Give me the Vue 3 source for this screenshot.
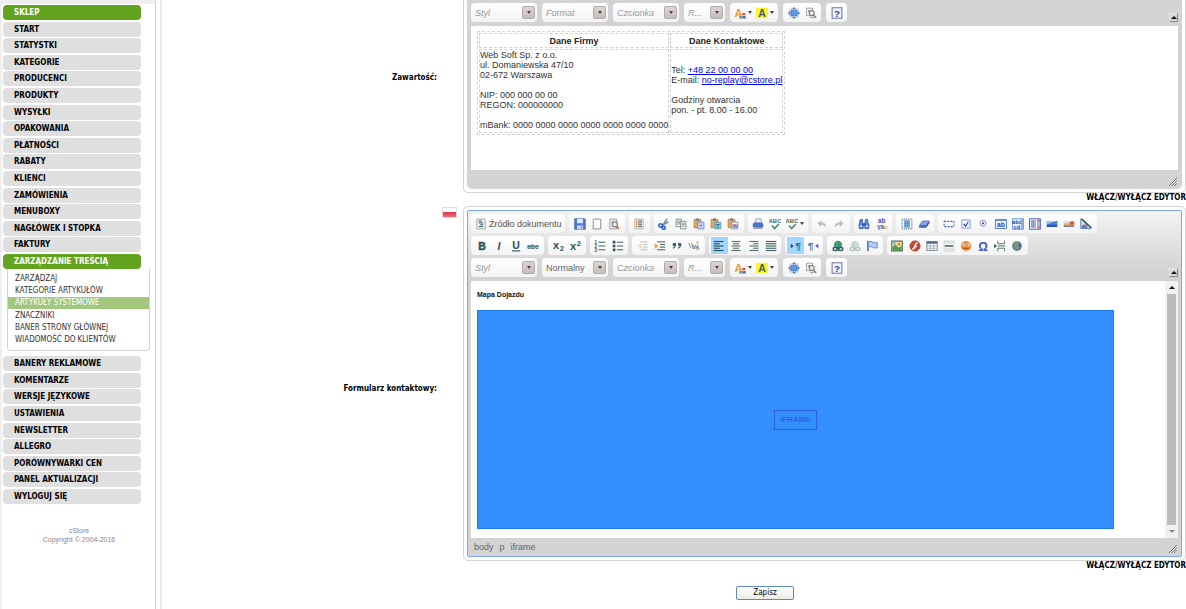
<script setup>
import { ref } from 'vue'

const menuTop = [
  'SKLEP', 'START', 'STATYSTKI', 'KATEGORIE', 'PRODUCENCI', 'PRODUKTY', 'WYSYŁKI', 'OPAKOWANIA',
  'PŁATNOŚCI', 'RABATY', 'KLIENCI', 'ZAMÓWIENIA', 'MENUBOXY', 'NAGŁÓWEK I STOPKA', 'FAKTURY', 'ZARZĄDZANIE TREŚCIĄ',
]
const highlighted = ['SKLEP', 'ZARZĄDZANIE TREŚCIĄ']
const submenu = [
  'ZARZĄDZAJ', 'KATEGORIE ARTYKUŁÓW', 'ARTYKUŁY SYSTEMOWE', 'ZNACZNIKI', 'BANER STRONY GŁÓWNEJ', 'WIADOMOŚĆ DO KLIENTÓW',
]
const activeSub = ref('ARTYKUŁY SYSTEMOWE')
const menuBottom = [
  'BANERY REKLAMOWE', 'KOMENTARZE', 'WERSJE JĘZYKOWE', 'USTAWIENIA', 'NEWSLETTER', 'ALLEGRO',
  'PORÓWNYWARKI CEN', 'PANEL AKTUALIZACJI', 'WYLOGUJ SIĘ',
]

const page = '<path d="M3 1.5h10v13H3z" fill="#fff" stroke="#5d7078"/>'
const clip = '<path d="M1.500 2h9v11h-9z" fill="#e9a85a" stroke="#b5713a"/><path d="M4 .5h4v3H4z" fill="#6c7c8c"/>'
const txt = (x, y, size, fill, s, extra = '') =>
  `<text x="${x}" y="${y}" font-size="${size}" fill="${fill}" text-anchor="middle" font-family="Liberation Sans, Arial, sans-serif" font-weight="bold" ${extra}>${s}</text>`
const lines = (color, rows) =>
  `<g stroke="${color}" stroke-width="1.500">${rows.map(([x1, x2, y]) => `<path d="M${x1} ${y}H${x2}"/>`).join('')}</g>`
const globe = (sea, land) =>
  `<circle cx="8" cy="6.500" r="5.500" fill="${sea}"/><path d="M4 4l3-2.500 3 1-2 3 1 3-3 1-3-3zM11 4l2 2-1 3-2-2z" fill="${land}"/>`
const chain = (c) =>
  `<g fill="none" stroke="${c}" stroke-width="2"><rect x="1.500" y="10" width="6" height="4" rx="2"/><rect x="8.500" y="10" width="6" height="4" rx="2"/><path d="M6 12h4"/></g>`

const art = {
  source: '<path d="M2.500 1.500h11v13h-11z" fill="#f4f8f8" stroke="#7c9498"/>' + lines('#3d6462', [[5, 9, 4], [5, 11, 6.5], [7, 11, 9], [5, 11, 11.5]]),
  save: '<path d="M1 1h13l1 1v13H1z" fill="#4a7ae0" stroke="#2f56b4"/><path d="M4 1h8v6H4z" fill="#dfeaff"/><path d="M4 10h8v5H4z" fill="#c9d6ee"/><path d="M9 11h2v3H9z" fill="#c98a3c"/>',
  newpage: page,
  preview: '<path d="M2.500 1.500h9v13h-9z" fill="#fff" stroke="#7b858a"/><path d="M4 4h5M4 6h3" stroke="#9aa"/><circle cx="9" cy="8.500" r="3.500" fill="#dfe9ec" stroke="#6b767b" stroke-width="1.400"/><path d="M11.500 11l3 3.500" stroke="#c8702f" stroke-width="2.200"/>',
  template: '<path d="M2.500 1.500h11v13h-11z" fill="#fff" stroke="#8a9894"/><path d="M4 3h2v10H4z" fill="#e9a33b"/>' + lines('#4d6664', [[7, 12, 4], [7, 12, 6.5], [7, 12, 9], [7, 12, 11.5]]),
  cut: '<path d="M12 1L6.500 9.500M14 5L5 10" stroke="#6f8fae" stroke-width="2"/><circle cx="3.500" cy="10" r="2.300" fill="none" stroke="#2f62c8" stroke-width="2.200"/><circle cx="7.500" cy="13" r="2" fill="none" stroke="#2f62c8" stroke-width="2.200"/>',
  copy: '<path d="M1.500 1.500h7v10h-7z" fill="#fff" stroke="#59706e"/><path d="M3 4h4M3 6h4M3 8h4" stroke="#59706e"/><path d="M7.500 4.500h7v10h-7z" fill="#fff" stroke="#59706e"/><path d="M9 7h4M9 9h4M9 11h4" stroke="#59706e"/>',
  paste: clip + '<path d="M6.500 5.500h8v9h-8z" fill="#fff" stroke="#3f66c4"/><path d="M8 8h5M8 10h5M8 12h5" stroke="#3f66c4"/>',
  pastetext: clip + '<path d="M6.500 5.500h8v9h-8z" fill="#8ec5df" stroke="#4c93b4"/>' + txt(10.5, 13, 8, '#26708f', 'T'),
  pasteword: clip + '<path d="M6.500 5.500h8v9h-8z" fill="#fff" stroke="#6a7fa4"/>' + txt(10.5, 13, 7, '#33509c', 'W'),
  print: '<path d="M5 1h7l1 6H4z" fill="#e3ecfa" stroke="#8793ab"/><path d="M1 8l2-2h10l2 2v4H1z" fill="#4a72c6"/><path d="M2 12h12v2.500H2z" fill="#8a98b4"/>',
  spell: txt(8, 7, 8, '#4a6866', 'ABC') + '<path d="M4 10l3.500 4L13 8" fill="none" stroke="#4a8a78" stroke-width="2.200"/>',
  undo: '<path d="M2 7l5-4v3c5 0 7 2 6 7-1-3-3-4-6-4v3z" fill="#b9c0c3"/>',
  redo: '<path d="M14 7L9 3v3c-5 0-7 2-6 7 1-3 3-4 6-4v3z" fill="#b9c0c3"/>',
  find: '<g fill="#5d86dd" stroke="#2c50a6"><path d="M3 2h3v4l1 2v6H1.500V8zM10 2h3v4l1.500 2v6H9V8z"/></g><path d="M6 7h4v3H6z" fill="#2c50a6"/><path d="M3 10h2v2H3zM11 10h2v2h-2z" fill="#fff"/>',
  replace: txt(7.5, 7, 8.5, '#3a50c0', 'ab') + txt(6, 14.5, 8.5, '#4c62cc', 'ya') + txt(13, 14.5, 8, '#e9903c', 'c'),
  selectall: '<path d="M1.500 1.500h13v13h-13z" fill="#f4f8fb" stroke="#56706f" stroke-width="1.300" stroke-dasharray="1.500 1"/><path d="M4 3h8v10H4z" fill="#76a6d8"/><path d="M5 5h6M5 7.500h6M5 10h6" stroke="#5a8cc4"/>',
  eraser: '<path d="M6 4h9l-4 6H2z" fill="#7fa6ee" stroke="#3f62bd"/><path d="M2 10h9v3H1z" fill="#3c5fbe"/><path d="M11 10l4-6v3l-4 6z" fill="#2d4a9c"/>',
  form: '<path d="M1.500 4.500h13v7h-13z" fill="none" stroke="#3c55c5" stroke-width="1.400" stroke-dasharray="2.500 1.800"/>',
  checkbox: '<path d="M2.500 2.500h11v11h-11z" fill="#f3f6ff" stroke="#6f82b8"/><path d="M5 8l2.500 3L11 5" fill="none" stroke="#2f49b5" stroke-width="1.600"/>',
  radio: '<circle cx="8" cy="7" r="4" fill="#f3f6ff" stroke="#8290bd" stroke-width="1.300"/><circle cx="8" cy="7" r="1.500" fill="#2f49b5"/>',
  textfield: '<path d="M.7 2h14.600v12H.7z" fill="#f5f8ff" stroke="#5a79c9" stroke-width="1.300"/><path d="M1 2h14v2H1z" fill="#6a93e2"/>' + txt(8, 12, 9, '#2f3fb0', 'ab'),
  textarea: '<path d="M.7 1h14.600v14H.7z" fill="#eef3ff" stroke="#6a9ae2" stroke-width="1.300"/><path d="M12 1h3v14h-3z" fill="#8fb2ec"/>' + txt(6.5, 7.5, 7.5, '#2f3f90', 'abc') + txt(6.5, 14, 7.5, '#2f3f90', 'cd'),
  select: '<path d="M.7 1h14.600v14H.7z" fill="#fff" stroke="#3f5fc0" stroke-width="1.300"/><path d="M10.500 1h4.500v14h-4.500z" fill="#9fbcf0"/><path d="M11 2h3.500v3H11zM11 11h3.500v3H11z" fill="#e3703c"/><path d="M2.500 4H9M2.500 6.700H9M2.500 9.400H9M2.500 12H9" stroke="#3246a5" stroke-width="1.500"/>',
  button: '<path d="M1 4h14v8H1z" fill="#2b55bb"/><path d="M1 4h14l-14 5z" fill="#9ec0f3"/><path d="M1 9l14-4v4z" fill="#4f83dd"/>',
  imagebutton: '<path d="M1 4h14v8H1z" fill="#e7b25b"/><path d="M1 4h8v3H1z" fill="#d9e4f4"/><path d="M9 6l4-2 2 2v3H9z" fill="#e2533a"/><path d="M1 10h14v2H1z" fill="#6b7fa8"/>',
  hidden: '<path d="M1 1l14 13H1z" fill="#cfe0fa" stroke="#3b64c3"/><path d="M2 1l13 12" stroke="#3e5a2c" stroke-width="2"/>' + txt(6, 13.5, 7, '#2b3da5', 'ab'),
  bold: txt(8, 13, 14, '#2f5558', 'B', 'stroke="#2f5558" stroke-width=".6"'),
  italic: txt(8, 13, 14, '#2f5558', 'I', 'font-style="italic"'),
  underline: txt(8, 12, 14, '#2f5558', 'U') + '<path d="M2.500 14.500h11" stroke="#2f5558" stroke-width="1.500"/>',
  strike: txt(8, 11.5, 9, '#4a6869', 'abc') + '<path d="M0 8.500h16" stroke="#4a6869"/>',
  sub: txt(5.5, 11.5, 15, '#2f5558', 'x') + txt(13, 15, 10, '#2f5558', '2'),
  sup: txt(5.5, 13.5, 15, '#2f5558', 'x') + txt(13, 8, 10, '#2f5558', '2'),
  ol: lines('#54716f', [[6, 15, 3], [6, 15, 8], [6, 15, 13]]) + txt(2.5, 5, 6, '#2f5558', '1') + txt(2.5, 10.5, 6, '#2f5558', '2') + txt(2.5, 16, 6, '#2f5558', '3'),
  ul: lines('#54716f', [[6.5, 15, 3], [6.5, 15, 8], [6.5, 15, 13]]) + '<path d="M1 1h3.500v3.500H1zM1 6.200h3.500v3.500H1zM1 11.400h3.500V15H1z" fill="#2f5558"/>',
  outdent: '<path d="M6 4L1 8l5 4z" fill="#f3d5b0"/>' + lines('#bac5c5', [[5, 14, 2.5], [8, 14, 6], [8, 14, 9.5], [5, 14, 13]]),
  indent: '<path d="M1 4l5 4-5 4z" fill="#eda04c"/>' + lines('#54716f', [[4, 15, 2.5], [8, 15, 6], [8, 15, 9.5], [4, 15, 13]]),
  quote: '<g fill="#3e6265"><circle cx="4.500" cy="6" r="2.400"/><circle cx="11.500" cy="6" r="2.400"/></g><path d="M6 6c0 3-1 4-3.500 5M13 6c0 3-1 4-3.500 5" fill="none" stroke="#3e6265" stroke-width="1.500"/>',
  div: '<path d="M1 4l3 7M5 4l2 8M12 8l3 3-3 3" fill="none" stroke="#72868a" stroke-width="1.300"/>' + txt(10, 12.5, 8, '#72868a', 'W') + '<path d="M11 3h3M12 5l2-3" stroke="#eaa052" stroke-width="1.500"/>',
  left: lines('#2a4f54', [[1, 14, 2], [1, 9, 5], [1, 14, 8], [1, 9, 11], [1, 14, 14]]),
  center: lines('#55706f', [[2, 14, 2], [4, 12, 5], [2, 14, 8], [4, 12, 11], [2, 14, 14]]),
  right: lines('#55706f', [[2, 14, 2], [7, 14, 5], [2, 14, 8], [7, 14, 11], [2, 14, 14]]),
  justify: lines('#3f6062', [[1, 15, 2], [1, 15, 5], [1, 15, 8], [1, 15, 11], [1, 15, 14]]),
  ltr: '<path d="M1 5l4 3-4 3z" fill="#2b3f9c"/>' + txt(11, 12, 13, '#41606a', '¶'),
  rtl: '<path d="M15 5l-4 3 4 3z" fill="#4c56b4"/>' + txt(5, 12, 13, '#5b7274', '¶'),
  link: globe('#3b7fd0', '#46a847') + chain('#35605d'),
  unlink: globe('#d3e0ec', '#bddcc2') + chain('#b7c5c6'),
  anchor: '<path d="M2.500 1v14" stroke="#3c5dc6" stroke-width="1.800"/><path d="M3 2h5l2 1.500h5v7h-5L8 9H3z" fill="#b7cdf4" stroke="#4b74cf"/>',
  image: '<path d="M1 1.500h14v13H1z" fill="#fbf0b4" stroke="#4d6b50" stroke-width="1.500"/><path d="M2 14V9l4-3 4 4 4-2v6z" fill="#4e9c55"/><circle cx="10.500" cy="5.500" r="2.300" fill="#e98e33"/><path d="M3 3h3v3H3z" fill="#68a2d8"/>',
  flash: '<circle cx="8" cy="8" r="6.800" fill="#cf4234" stroke="#a53324"/><path d="M11.500 4c-3 0-3 2-3.500 4s-1.500 4-3.500 4M7 8.500h3.500" fill="none" stroke="#fff" stroke-width="2"/>',
  table: '<path d="M1 2h14v12H1z" fill="#fff" stroke="#5f7278"/><path d="M1 2h14v3H1z" fill="#4e6b92"/><path d="M1 8h14M1 11h14M5.700 5v9M10.300 5v9" stroke="#94a3aa"/>',
  hr: '<path d="M1.500 1.500h13v13h-13z" fill="#f8fafa" stroke="#b9c2c2"/><path d="M3 4h10M3 12h10" stroke="#b3bdbd"/><path d="M2.500 8h11" stroke="#3f5d5d" stroke-width="2"/>',
  smile: '<circle cx="8" cy="8" r="6.800" fill="#f28b38"/><circle cx="5.300" cy="6.500" r="1.800" fill="#fff"/><circle cx="10.700" cy="6.500" r="1.800" fill="#fff"/><circle cx="5.500" cy="6.500" r=".8" fill="#333"/><circle cx="10.500" cy="6.500" r=".8" fill="#333"/><path d="M4.500 11h7" stroke="#8e4212" stroke-width="1.300"/>',
  omega: txt(8, 14, 16, '#3b58cf', 'Ω'),
  pagebreak: '<path d="M5 1v4h9V1M5 15v-4h9v4" fill="#f4f7f7" stroke="#64797a" stroke-width="1.300"/><path d="M5 8h10" stroke="#64797a" stroke-width="1.500"/><path d="M0 5l4 3-4 3z" fill="#3f6062"/>',
  iframe: '<circle cx="8" cy="8" r="6.500" fill="#5f7ba2"/><path d="M4 4l4-2 3 2-2 3 2 3-3 3-3-2z" fill="#7d9a66"/><path d="M10 5l3 2-1 3-2-2z" fill="#4a64a8"/>',
  color: txt(6, 13, 15, '#ef9c3f', 'A') + '<path d="M11 8h4v3h-4z" fill="#e24834"/><path d="M7 12h4v3.500H7z" fill="#58b04c"/><path d="M11.500 12h4v3.500h-4z" fill="#5262d8"/>',
  bgcolor: '<path d="M0 1h16v14H0z" fill="#fbf435"/>' + txt(8, 13, 14, '#48605d', 'A'),
  maximize: '<path d="M8 0l2.500 3h-5zM8 16l2.500-3h-5zM0 8l3-2.500v5zM16 8l-3-2.500v5z" fill="#47657e"/><rect x="2.500" y="2.500" width="11" height="11" rx="2" fill="none" stroke="#7da3cc"/><path d="M4 4.500h8v7H4z" fill="#5d9ae6" stroke="#3b6fb8"/>',
  blocks: '<path d="M2 1.500h8v10H2z" fill="#f3f3f3" stroke="#8d8d8d"/><path d="M4 4h3v3H4z" fill="#9aa"/><circle cx="9" cy="8" r="3.300" fill="#e7eaea" stroke="#777" stroke-width="1.400"/><path d="M7 13h5v2H7z" fill="#aaa"/><path d="M11.500 10.500l3 4" stroke="#a66c45" stroke-width="2"/>',
  about: '<path d="M1.500 1h13v14h-13z" fill="#f2f5ff" stroke="#6d7a9d" stroke-width="1.400"/>' + txt(8, 13, 13, '#2b3dab', '?'),
}

const b = (id, title, opt = {}) => ({ id, title, ...opt })
const rowOne = [
  [b('save', 'Zapisz'), b('newpage', 'Nowa strona'), b('preview', 'Podgląd')],
  [b('template', 'Szablony')],
  [b('cut', 'Wytnij'), b('copy', 'Kopiuj'), b('paste', 'Wklej'), b('pastetext', 'Wklej jako tekst'), b('pasteword', 'Wklej z Worda')],
  [b('print', 'Drukuj'), b('spell', 'Sprawdź pisownię'), b('spell', 'Pisownia', { arrow: true })],
  [b('undo', 'Cofnij'), b('redo', 'Ponów')],
  [b('find', 'Znajdź'), b('replace', 'Zamień')],
  [b('selectall', 'Zaznacz wszystko'), b('eraser', 'Usuń formatowanie')],
  [b('form', 'Formularz'), b('checkbox', 'Pole wyboru'), b('radio', 'Pole opcji'), b('textfield', 'Pole tekstowe'), b('textarea', 'Obszar tekstowy'),
    b('select', 'Lista'), b('button', 'Przycisk'), b('imagebutton', 'Przycisk graficzny'), b('hidden', 'Pole ukryte')],
]
const rowTwo = [
  [b('bold', 'Pogrubienie'), b('italic', 'Kursywa'), b('underline', 'Podkreślenie'), b('strike', 'Przekreślenie')],
  [b('sub', 'Indeks dolny'), b('sup', 'Indeks górny')],
  [b('ol', 'Lista numerowana'), b('ul', 'Lista wypunktowana')],
  [b('outdent', 'Zmniejsz wcięcie'), b('indent', 'Zwiększ wcięcie'), b('quote', 'Cytat'), b('div', 'Kontener div')],
  [b('left', 'Do lewej', { on: true }), b('center', 'Do środka'), b('right', 'Do prawej'), b('justify', 'Wyjustuj')],
  [b('ltr', 'Od lewej do prawej', { on: true }), b('rtl', 'Od prawej do lewej')],
  [b('link', 'Odnośnik'), b('unlink', 'Usuń odnośnik'), b('anchor', 'Kotwica')],
  [b('image', 'Obrazek'), b('flash', 'Flash'), b('table', 'Tabela'), b('hr', 'Linia pozioma'), b('smile', 'Emotikona'),
    b('omega', 'Znak specjalny'), b('pagebreak', 'Podział strony'), b('iframe', 'IFrame')],
]
const rowThree = [
  [b('color', 'Kolor tekstu', { arrow: true }), b('bgcolor', 'Kolor tła', { arrow: true })],
  [b('maximize', 'Maksymalizuj'), b('blocks', 'Pokaż bloki')],
  [b('about', 'O edytorze')],
]
const combosFor = (format) => [
  { label: 'Styl', text: 'Styl' },
  { label: 'Format', text: format, set: format !== 'Format' },
  { label: 'Czcionka', text: 'Czcionka' },
  { label: 'Rozmiar', text: 'R...', small: true },
]
const editors = [
  { id: 'content', label: 'Zawartość:', combos: combosFor('Format'), rows: [] },
  { id: 'form', label: 'Formularz kontaktowy:', combos: combosFor('Normalny'), rows: [rowOne, rowTwo] },
]
const weight = (group) => ({ flexGrow: group.length })
</script>

<template>
  <div class="page">
    <aside class="sidebar">
      <nav class="nav">
        <ul class="menu menu-top">
          <li v-for="m in menuTop" :key="m"><a href="#" :class="{ green: highlighted.includes(m) }">{{ m }}</a></li>
        </ul>
        <ul class="submenu">
          <li v-for="s in submenu" :key="s"><a href="#" :class="{ active: s === activeSub }" @click.prevent="activeSub = s">{{ s }}</a></li>
        </ul>
        <ul class="menu menu-bottom">
          <li v-for="m in menuBottom" :key="m"><a href="#">{{ m }}</a></li>
        </ul>
      </nav>
      <footer class="copyright">cStore<br>Copyright © 2004-2016</footer>
    </aside>

    <main class="main">
      <section v-for="e in editors" :key="e.id" class="field" :class="e.id">
        <h2 class="label">{{ e.label }}</h2>
        <div class="flag-cell"><span v-if="e.id === 'form'" class="flag"></span></div>
        <div class="editor-cell">
          <div class="frame">
            <div class="editor">
              <div class="toolbar">
                <div class="rows">
                  <div v-for="(row, i) in e.rows" :key="i" class="row" :class="'row-' + i">
                    <button v-if="i === 0" type="button" class="group source">
                      <svg class="ico" viewBox="0 0 16 16" v-html="art.source"></svg>Źródło dokumentu
                    </button>
                    <div v-for="(g, gi) in row" :key="gi" class="group grow" :style="weight(g)">
                      <button v-for="(t, ti) in g" :key="ti" type="button" class="tool" :class="{ on: t.on, wide: t.arrow }" :title="t.title" :aria-label="t.title">
                        <svg class="ico" viewBox="0 0 16 16" v-html="art[t.id]"></svg><i v-if="t.arrow" class="caret"></i>
                      </button>
                    </div>
                  </div>
                  <div class="row combos">
                    <div v-for="c in e.combos" :key="c.label" class="group combo" :class="{ small: c.small, set: c.set }">
                      <select :aria-label="c.label"><option>{{ c.text }}</option></select>
                      <span class="drop"><i class="caret"></i></span>
                    </div>
                    <div v-for="(g, gi) in rowThree" :key="gi" class="group">
                      <button v-for="(t, ti) in g" :key="ti" type="button" class="tool" :class="{ wide: t.arrow }" :title="t.title" :aria-label="t.title">
                        <svg class="ico" viewBox="0 0 16 16" v-html="art[t.id]"></svg><i v-if="t.arrow" class="caret"></i>
                      </button>
                    </div>
                  </div>
                </div>
                <button type="button" class="collapser" aria-label="Zwiń pasek"><i class="up"></i></button>
              </div>

              <div v-if="e.id === 'content'" class="doc doc-content">
                <table class="contact">
                  <thead><tr><th>Dane Firmy</th><th>Dane Kontaktowe</th></tr></thead>
                  <tbody>
                    <tr>
                      <td>Web Soft Sp. z o.o.<br>ul. Domaniewska 47/10<br>02-672 Warszawa<br><br>NIP: 000 000 00 00<br>REGON: 000000000<br><br>mBank: 0000 0000 0000 0000 0000 0000 0000</td>
                      <td>Tel: <a href="#">+48 22 00 00 00</a><br>E-mail: <a href="#">no-replay@cstore.pl</a><br><br>Godziny otwarcia<br>pon. - pt. 8.00 - 16.00</td>
                    </tr>
                  </tbody>
                </table>
              </div>
              <div v-else class="doc doc-form">
                <div class="body">
                  <h6>Mapa Dojazdu</h6>
                  <div class="map"><span>IFRAME</span></div>
                </div>
                <div class="scroll">
                  <i class="up"></i>
                  <div class="thumb"></div>
                  <i class="up down"></i>
                </div>
              </div>

              <div class="status">
                <div class="path"><template v-if="e.id === 'form'"><a href="#">body</a><a href="#">p</a><a href="#">iframe</a></template></div>
                <svg class="grip" viewBox="0 0 10 10"><path d="M0 10L9 1M3 10l6-6M6 10l3-3" stroke="#fff" transform="translate(1 0)" /><path d="M0 10L9 1M3 10l6-6M6 10l3-3" stroke="#555" /></svg>
              </div>
            </div>
          </div>
          <a href="#" class="toggle">WŁĄCZ/WYŁĄCZ EDYTOR</a>
        </div>
      </section>
      <div class="actions"><button type="submit" class="submit">Zapisz</button></div>
    </main>
  </div>
</template>

<style>
body { background: #fff; overflow: hidden; }
</style>

<style scoped>
.page { display: flex; min-height: 100vh; font: 8px/10px "DejaVu Sans Condensed", "DejaVu Sans", Tahoma, sans-serif; color: #000; }
.page * { box-sizing: border-box; }
a { color: inherit; text-decoration: none; }
ul { list-style: none; margin: 0; padding: 0; }
button, select { font: inherit; color: inherit; margin: 0; }

.sidebar { flex: none; width: 156px; border-top: 4px solid #efefef; border-left: 2px solid #efefef; border-right: 1px solid #ccc; padding: 1px 0 0 1px; }
.menu { display: flex; flex-direction: column; justify-content: space-between; width: 138px; }
.menu-top { height: 264px; }
.menu-bottom { height: 148px; margin-top: 5px; }
.menu a { display: block; height: 15px; line-height: 15px; padding-left: 11px; border-radius: 4px; background: #dfdfdf; font-weight: bold; }
.menu a.green { background: #62a420; color: #fff; }
.submenu { display: flex; flex-direction: column; justify-content: space-between; width: 143px; height: 82px; margin-left: 4px; padding: 4px 0; border: 1px solid #d3d3d3; border-top: 0; border-radius: 0 0 4px 4px; }
.submenu a { display: block; line-height: 12px; padding-left: 7px; color: #333; }
.submenu a.active { background: #a3c77d; color: #fff; }
.copyright { margin-top: 22px; text-align: center; font: 7px/9px "Liberation Sans", Arial, sans-serif; color: #888; }

.main { flex: 1; min-width: 0; margin-left: 4px; border-left: 2px solid #ebebeb; }
.field { display: grid; grid-template-columns: 275px 26px minmax(0, 1fr); }
.label { margin: 0; align-self: center; text-align: right; font-size: 8px; line-height: 10px; }
.content .label { padding-bottom: 50px; }
.form .label { padding-bottom: 2px; }
.flag-cell { padding: 1px 0 0 5px; }
.flag { display: block; width: 15px; height: 11px; background: linear-gradient(#fff 50%, #e8384f 50%, #f0707f); border: 1px solid #ddd; }
.editor-cell { display: flex; flex-direction: column; }
.frame { border: 1px solid #d3d3d3; border-radius: 5px; padding: 3px; }
.content .frame { border-top: 0; padding-top: 0; border-radius: 0 0 5px 5px; }
.editor { background: #d3d3d3; border-radius: 0 0 5px 5px; padding: 0 4px; font: 9px/10px "Liberation Sans", Arial, sans-serif; }
.form .editor { border: 1px solid #7fa5ee; border-radius: 2px; padding: 0 3px; background: linear-gradient(#f3f3f3, #d3d3d3 60px); }
.toolbar { display: flex; justify-content: space-between; align-items: flex-end; padding: 3px 0 4px; }
.rows { display: flex; flex-direction: column; gap: 3px; }
.row { display: flex; gap: 4px; }
.row-0 { width: 626px; }
.row-1 { width: 557px; }
.group { display: flex; align-items: center; height: 19px; padding: 0 2px; border: 0; border-radius: 4px; background: linear-gradient(#fff, #f3f3f3); }
.grow { flex: 1 1 4px; }
.source { flex: none; width: 94px; padding: 0 4px; gap: 2px; color: #555; white-space: nowrap; }
.tool { flex: 1 0 17px; display: flex; align-items: center; justify-content: center; height: 17px; padding: 0; border: 0; background: none; }
.tool.wide { flex: 1 0 22px; gap: 2px; }
.tool.on { background: #a3d7ff; }
.ico { display: block; flex: none; width: 12px; height: 12px; }
.caret { border: 2px solid transparent; border-top: 3px solid #444; border-bottom: 0; }
.combos { gap: 5px; }
.combo { width: 66px; padding: 0 2px 0 4px; color: #999; }
.combo.small { width: 41px; }
.combo select { flex: 1; min-width: 0; appearance: none; padding: 0; border: 0; background: none; outline: 0; font-style: italic; }
.combo.set select { font-style: normal; color: #666; }
.drop { flex: none; display: flex; align-items: center; justify-content: center; width: 13px; height: 13px; border: 1px solid #b3aaaa; border-radius: 2px; background: linear-gradient(#ddd4d4, #c6bdbd); pointer-events: none; }
.collapser { flex: none; width: 9px; height: 9px; padding: 0; display: flex; align-items: center; justify-content: center; border: 1px solid; border-color: #e6e6e6 #888 #888 #e6e6e6; background: #d8d8d8; }
.up { border: 3px solid transparent; border-bottom: 3px solid #111; border-top: 0; }
.down { transform: rotate(180deg); border-bottom-color: #888; }
.doc { background: #fff; color: #333; }
.doc-content { min-height: 144px; padding: 5px 6px; }
.contact { border: 1px dashed #d3d3d3; border-spacing: 1px; }
.contact th, .contact td { border: 1px dashed #d3d3d3; padding: 0; }
.contact td { padding-bottom: 2px; }
.contact th { height: 15px; color: #222; }
.contact a { color: #00e; text-decoration: underline; }
.doc-form { display: flex; }
.body { flex: 1; min-width: 0; padding: 9px 6px; }
.body h6 { margin: 0 0 10px; font-size: 7px; line-height: 10px; color: #111; }
.map { display: flex; align-items: center; justify-content: center; max-width: 637px; height: 219px; background: #338fff; border: 1px solid #1f7bed; }
.map span { padding: 4px 5px; border: 1px solid #2a64dc; font-size: 8px; font-weight: bold; color: #2a64dc; }
.scroll { flex: none; display: flex; flex-direction: column; align-items: center; gap: 5px; width: 13px; padding: 5px 0; background: #f1f1f1; }
.thumb { flex: 1; width: 9px; background: #bcbcbc; }
.status { display: flex; align-items: center; justify-content: space-between; height: 19px; }
.form .status { height: 18px; }
.path { display: flex; gap: 6px; padding-left: 3px; color: #666; }
.grip { width: 9px; height: 9px; margin-top: 3px; }
.toggle { align-self: flex-end; font-size: 8px; line-height: 10px; font-weight: bold; margin-bottom: 3px; }
.actions { padding: 12px 0 0 574px; }
.submit { width: 58px; height: 14px; padding: 0; border: 1px solid #5f8bb8; border-radius: 2px; background: linear-gradient(#fff, #ebeae4); line-height: 12px; }
</style>
